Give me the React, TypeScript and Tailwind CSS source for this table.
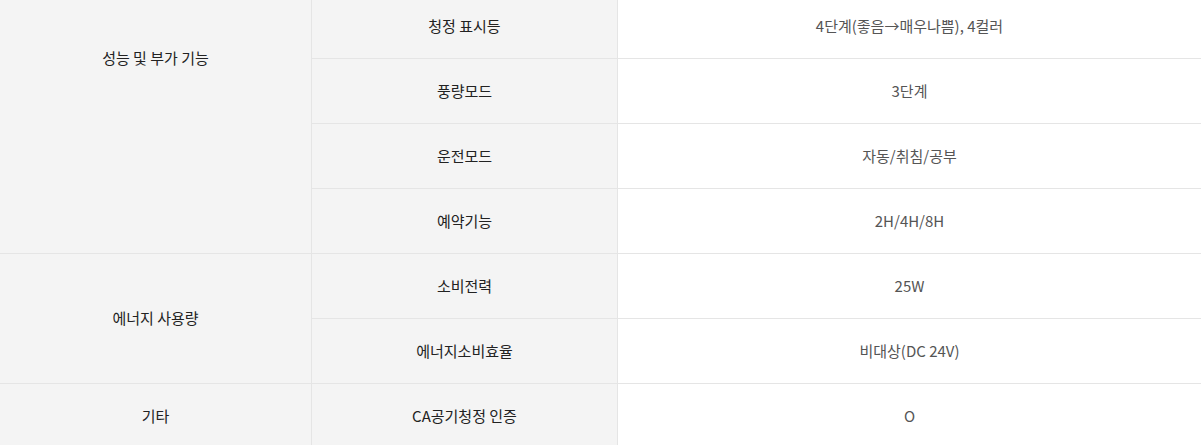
type Row = { name: string; value: string };
type Group = { label: string; rows: Row[]; labelClass: string };

const groups: Group[] = [
  {
    label: "성능 및 부가 기능",
    labelClass: "items-start pt-[53px]",
    rows: [
      { name: "청정 표시등", value: "4단계(좋음→매우나쁨), 4컬러" },
      { name: "풍량모드", value: "3단계" },
      { name: "운전모드", value: "자동/취침/공부" },
      { name: "예약기능", value: "2H/4H/8H" },
    ],
  },
  {
    label: "에너지 사용량",
    labelClass: "items-center",
    rows: [
      { name: "소비전력", value: "25W" },
      { name: "에너지소비효율", value: "비대상(DC 24V)" },
    ],
  },
  {
    label: "기타",
    labelClass: "items-center",
    rows: [{ name: "CA공기청정 인증", value: "O" }],
  },
];

export default function App() {
  return (
    <div
      className="w-[1201px] h-[445px] overflow-hidden bg-white text-[15px]"
      style={{ fontFamily: '"Noto Sans CJK KR", "Noto Sans", sans-serif' }}
    >
      <div className="-mt-[6px]">
        {groups.map((g) => (
          <div key={g.label} className="flex">
            {/* 분류 */}
            <div
              className={
                "w-[312px] shrink-0 flex justify-center bg-[#f4f4f4] border-r border-b border-[#e5e5e5] text-[#222] " +
                g.labelClass
              }
            >
              {g.label}
            </div>
            <div className="flex-1 flex flex-col">
              {g.rows.map((r) => (
                <div key={r.name} className="flex h-[65px] border-b border-[#e5e5e5]">
                  <div className="w-[306px] shrink-0 flex items-center justify-center bg-[#f4f4f4] border-r border-[#e5e5e5] text-[#222]">
                    {r.name}
                  </div>
                  <div className="flex-1 flex items-center justify-center text-[#555]">
                    {r.value}
                  </div>
                </div>
              ))}
            </div>
          </div>
        ))}
      </div>
    </div>
  );
}
